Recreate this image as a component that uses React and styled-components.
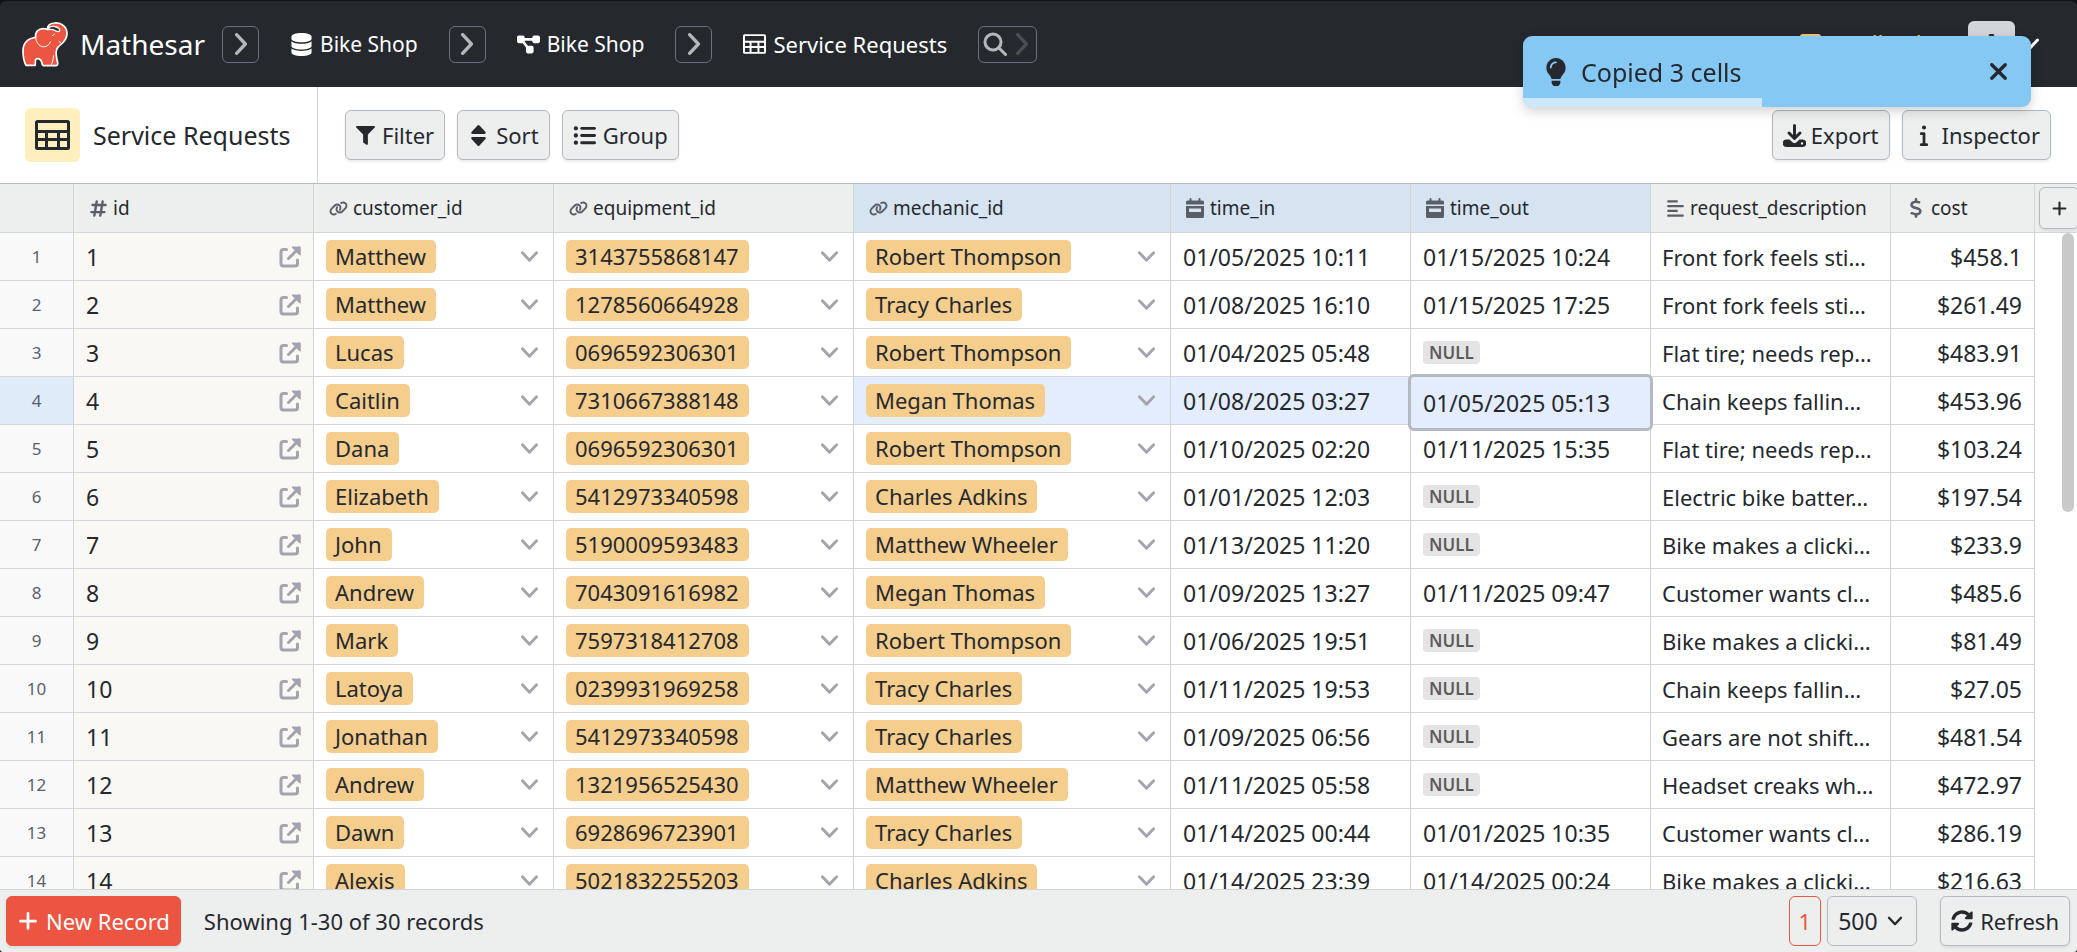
import React from "react";
import styled, { createGlobalStyle, css } from "styled-components";
import { FaDatabase, FaDiagramProject, FaDollarSign, FaAlignLeft, FaListUl, FaXmark, FaInfo, FaPlus, FaHashtag, FaLink, FaMessage } from "react-icons/fa6";
import { FaLightbulb, FaSyncAlt, FaFilter } from "react-icons/fa";

const Global = createGlobalStyle`
  * { box-sizing: border-box; }
  html { background: #111214; }
  body { margin: 0; font-family: "Noto Sans", sans-serif; font-size: 23px; line-height: 32px; color: #25292e; }
  button, select { font: inherit; color: inherit; margin: 0; cursor: pointer; }
  a { color: inherit; text-decoration: none; }
  svg { display: block; flex: none; }
`;

const Page = styled.div`
  height: 100vh;
  border-top: 1px solid #121315;
  display: flex;
  flex-direction: column;
`;

const Header = styled.header`
  height: 86px;
  flex: none;
  background: #25292e;
  color: #fff;
  border-radius: 6px 6px 0 0;
  display: flex;
  align-items: center;
  padding: 0 37px 0 22px;
`;

const Brand = styled.a`
  display: flex;
  align-items: center;
  gap: 11px;
  font-size: 28px;
  width: 200px;
`;

const Crumb = styled.a`
  display: flex;
  align-items: center;
  gap: 7px;
  margin: 0 31px;
  font-size: ${(p) => (p.$current ? 22 : 21)}px;
`;

const NavButton = styled.button`
  height: 37px;
  width: ${(p) => (p.$wide ? 59 : 37)}px;
  padding: 0;
  border: 1px solid #6b7080;
  border-radius: 6px;
  background: none;
  color: #b4b7bd;
  display: flex;
  align-items: center;
  justify-content: center;
  gap: 4px;
`;

const UserArea = styled.div`
  margin-left: auto;
  display: flex;
  align-items: center;
  gap: 5px;
`;

const Feedback = styled.a`
  display: flex;
  align-items: center;
  gap: 5px;
  margin-right: 35px;
  font-size: 23px;
  color: #f8c471;
`;

const Avatar = styled.span`
  width: 47px;
  height: 47px;
  border-radius: 6px;
  background: #d2d5da;
  color: #25292e;
  font-size: 28px;
  font-weight: 600;
  text-align: center;
  line-height: 47px;
`;

const Toolbar = styled.div`
  height: 97px;
  flex: none;
  background: #fff;
  border-bottom: 1px solid #b3bac3;
  display: flex;
  align-items: center;
  gap: 12px;
  padding-right: 26px;
`;

const Title = styled.h1`
  margin: 0 15px 0 0;
  height: 100%;
  width: 318px;
  border-right: 1px solid #d2d5da;
  padding-left: 25px;
  display: flex;
  align-items: center;
  gap: 13px;
  font-size: 25px;
  font-weight: 400;
  white-space: nowrap;
`;

const TitleIcon = styled.span`
  width: 55px;
  height: 54px;
  border-radius: 6px;
  background: #ffefbf;
  display: flex;
  align-items: center;
  justify-content: center;
`;

const Button = styled.button`
  height: 50px;
  padding: 0 10px;
  border: 1px solid #b3bac3;
  border-radius: 6px;
  background: #edefee;
  box-shadow: 0 2px 3px rgba(0, 0, 0, 0.08);
  display: flex;
  align-items: center;
  justify-content: center;
  gap: ${(p) => (p.$tight ? 5 : 7)}px;
  font-size: 22px;
  white-space: nowrap;
  ${(p) => p.$primary && css`
    background: #eb5541;
    border-color: #eb5541;
    color: #fff;
  `}
  ${(p) => p.$current && css`
    padding: 0 9px;
    border-color: #eb5541;
    color: #eb5541;
    box-shadow: none;
  `}
`;

const Spacer = styled.div`
  flex: 1;
`;

const Sheet = styled.main`
  flex: 1;
  min-height: 0;
  overflow: hidden;
  background: #fff;
  position: relative;
`;

const Table = styled.table`
  width: 100%;
  min-width: 2090px;
  table-layout: fixed;
  border-collapse: separate;
  border-spacing: 0;
`;

const HeadCell = styled.th`
  height: 49px;
  padding: 0 0 0 15px;
  text-align: left;
  font-weight: 400;
  font-size: 19px;
  background: ${(p) => (p.$selected ? "#d6e3f0" : "#edefee")};
  border-right: 1px solid #d2d5da;
  border-bottom: 1px solid #d2d5da;
  &:last-child { border-right: 0; padding-left: 4px; }
`;

const HeadLabel = styled.span`
  display: flex;
  align-items: center;
  gap: 5px;
  svg { color: #5a5e66; }
`;

const AddColumn = styled(Button)`
  width: 40px;
  height: 42px;
  padding: 0;
`;

const RowNumber = styled.th`
  height: 48px;
  padding: 0;
  font-size: 17px;
  font-weight: 400;
  color: #5a606b;
  background: ${(p) => (p.$selected ? "#deebf8" : "#f9f9fa")};
  border-right: 1px solid #d2d5da;
  border-bottom: 1px solid #d2d5da;
`;

const Cell = styled.td`
  height: 48px;
  padding: 0 12px;
  white-space: nowrap;
  overflow: hidden;
  text-align: ${(p) => (p.$right ? "right" : "left")};
  background: ${(p) => (p.$selected ? "#e4edfd" : p.$key ? "#f9f8f4" : "#fff")};
  border-right: 1px solid #d2d5da;
  border-bottom: 1px solid #d2d5da;
  ${(p) => p.$prose && css`
    padding: 0 11px;
    font-size: 22px;
  `}
  ${(p) => p.$active && css`
    position: relative;
    overflow: visible;
  `}
`;

const BlankCell = styled.td`
  padding: 0;
`;

const ActiveBox = styled.div`
  position: absolute;
  inset: -3px -3px -7px -3px;
  z-index: 1;
  padding: 0 12px;
  border: 3px solid #b3bac1;
  border-radius: 6px;
  background: #e4edfd;
  display: flex;
  align-items: center;
`;

const Split = styled.div`
  display: flex;
  align-items: center;
  justify-content: space-between;
`;

const Pill = styled.span`
  height: 33px;
  line-height: 33px;
  padding: 0 10px 0 9px;
  border-radius: 5px;
  background: #f5cd8d;
  font-size: 22px;
`;

const IconButton = styled.button`
  border: 0;
  padding: ${(p) => (p.$inset ? "0 2px" : 0)};
  background: none;
  color: #a3a4ad;
`;

const Null = styled.span`
  display: block;
  width: max-content;
  padding: 0 6px;
  border-radius: 4px;
  background: #e4e4e4;
  color: #5c5c5c;
  font-size: 17px;
  line-height: 23px;
  font-weight: 600;
`;

const ScrollThumb = styled.div`
  position: absolute;
  top: 49px;
  right: 3px;
  width: 12px;
  height: 279px;
  border-radius: 6px;
  background: #c9c9c9;
`;

const Footer = styled.footer`
  height: 63px;
  flex: none;
  border-top: 1px solid #d2d5da;
  border-radius: 0 0 3px 3px;
  background: #edefee;
  display: flex;
  align-items: center;
  gap: 6px;
  padding: 0 7px 0 6px;
`;

const Count = styled.span`
  margin-left: 17px;
  font-size: 22px;
`;

const SizePicker = styled.label`
  position: relative;
  display: flex;
  align-items: center;
  margin-right: 17px;
  select {
    appearance: none;
    width: 90px;
    height: 50px;
    padding: 0 0 0 10px;
    border: 1px solid #b3bac3;
    border-radius: 6px;
    background: #edefee;
  }
  svg { position: absolute; right: 14px; pointer-events: none; }
`;

const Toast = styled.div`
  position: fixed;
  top: 36px;
  right: 46px;
  width: 508px;
  height: 71px;
  z-index: 5;
  padding: 0 19px;
  border-radius: 9px;
  overflow: hidden;
  background: #85c8f4;
  display: flex;
  align-items: center;
  gap: 11px;
  font-size: 25px;
  filter: drop-shadow(0 4px 6px rgba(0, 0, 0, 0.18));
`;

const ToastProgress = styled.div`
  position: absolute;
  left: 0;
  bottom: 0;
  width: 47%;
  height: 9px;
  background: #cee8fb;
`;

const CloseButton = styled(IconButton)`
  margin-left: auto;
  color: #25292e;
`;

const Chevron = ({ size = 20, dir = "down", width = 3, color = "currentColor" }) => (
  <svg width={size} height={size} viewBox="0 0 20 20" fill="none" stroke={color} strokeWidth={width} strokeLinecap="round" strokeLinejoin="round">
    <path d={dir === "down" ? "M2.5 6 10 14 17.5 6" : "M6 1.5 14 10 6 18.5"} />
  </svg>
);

const TableIcon = ({ w, h, stroke = 2 }) => (
  <svg width={w} height={h} viewBox="0 0 35 30" fill="none" stroke="currentColor" strokeWidth={stroke}>
    <rect x="1.5" y="1.5" width="32" height="27" rx="1" />
    <path d="M1 11.500h33M1 19.500h33M11.500 11v17M23.500 11v17" />
  </svg>
);

const OpenIcon = () => (
  <svg width="22" height="22" viewBox="0 0 22 22" fill="none" stroke="currentColor" strokeWidth="3" strokeLinecap="round">
    <path d="M7.500 3.500H4.500a2.500 2.500 0 0 0-2.500 2.500v11.500A2.500 2.500 0 0 0 4.500 20h11.500a2.500 2.500 0 0 0 2.500-2.500V14" />
    <path d="M9.500 12.500 17 5" />
    <path d="M13.500 1.200h7.500v7.500z" fill="currentColor" strokeWidth="1.500" strokeLinejoin="round" />
  </svg>
);

const CalendarIcon = () => (
  <svg width="19" height="20" viewBox="0 0 19 20" fill="currentColor">
    <path d="M0 6.500V4a1.500 1.500 0 0 1 1.500-1.500H3.500V1a1 1 0 0 1 2 0v1.500h7V1a1 1 0 0 1 2 0v1.500h2A1.500 1.500 0 0 1 18 4v2.500z" />
    <path fillRule="evenodd" d="M0 8h18v10.500a1.500 1.500 0 0 1-1.500 1.500h-15A1.500 1.500 0 0 1 0 18.500zM3 10.500v3.500h12v-3.500z" />
  </svg>
);

const SortIcon = () => (
  <svg width="21" height="21" viewBox="-3 0 21 21" fill="currentColor">
    <path d="M6.500.6a1.400 1.400 0 0 1 2 0l5.800 6.200c.9 1 .4 2.200-.8 2.200h-12C.3 9-.2 7.800.7 6.800zM6.500 20.400a1.400 1.400 0 0 0 2 0l5.800-6.200c.9-1 .4-2.200-.8-2.200h-12c-1.200 0-1.700 1.200-.8 2.200z" />
  </svg>
);

const ExportIcon = () => (
  <svg width="23" height="23" viewBox="0 0 23 23">
    <path d="M11.500 1.500V13M6 9l5.500 5.500L17 9" fill="none" stroke="currentColor" strokeWidth="3" strokeLinecap="round" strokeLinejoin="round" />
    <path fillRule="evenodd" fill="currentColor" d="M3.500 15.500h3l3 2.700a3 3 0 0 0 4 0l3-2.700h3a3.500 3.500 0 0 1 0 7.500h-16a3.500 3.500 0 0 1 0-7.500zM19 18.200a1.200 1.200 0 1 0 0 2.400 1.200 1.200 0 0 0 0-2.400z" />
  </svg>
);

const SearchIcon = () => (
  <svg width="24" height="24" viewBox="0 0 24 24" fill="none" stroke="currentColor" strokeWidth="3" strokeLinecap="round">
    <circle cx="10" cy="10" r="8" />
    <path d="m16 16 6.500 6.500" />
  </svg>
);

const Logo = () => (
  <svg width="47" height="47" viewBox="18 20 142 142">
    <path
      fill="#eb5541"
      stroke="#fff"
      strokeWidth="5"
      strokeLinejoin="round"
      d="M59 69C57 54 68 42 84 43Q90 43 96 46C93 36 101 27 116 26C138 24 154 38 154 58C154 76 144 85 133 93C122 101 119 111 122 126Q123 137 126 147Q127 155 117 155H84Q79 155 78 146C76 133 64 131 59 137Q58 144 58 154H30C24 143 21 128 21 110C21 86 36 73 59 69Z"
    />
    <path fill="#25292e" stroke="#fff" strokeWidth="4" strokeLinejoin="round" d="M99 40C109 34 123 36 130 43Q135 50 128 52C119 52 113 42 99 46Z" />
    <path fill="none" stroke="#fff" strokeWidth="3" strokeLinecap="round" d="M59 68C60 84 69 97 83 98C94 98 101 91 104 83M110 64l6-4M130 82l4 3M113 125C113 136 110 146 106 153" />
  </svg>
);

const columns = [
  ["id", <FaHashtag size={19} />, 240],
  ["customer_id", <FaLink size={19} />, 240],
  ["equipment_id", <FaLink size={19} />, 300],
  ["mechanic_id", <FaLink size={19} />, 317, true],
  ["time_in", <CalendarIcon />, 240, true],
  ["time_out", <CalendarIcon />, 240, true],
  ["request_description", <FaAlignLeft size={19} />, 240],
  ["cost", <FaDollarSign size={20} />, 144],
];

const rows = [
  ["Matthew", "3143755868147", "Robert Thompson", "01/05/2025 10:11", "01/15/2025 10:24", "Front fork feels sti…", "$458.1"],
  ["Matthew", "1278560664928", "Tracy Charles", "01/08/2025 16:10", "01/15/2025 17:25", "Front fork feels sti…", "$261.49"],
  ["Lucas", "0696592306301", "Robert Thompson", "01/04/2025 05:48", null, "Flat tire; needs rep…", "$483.91"],
  ["Caitlin", "7310667388148", "Megan Thomas", "01/08/2025 03:27", "01/05/2025 05:13", "Chain keeps fallin…", "$453.96"],
  ["Dana", "0696592306301", "Robert Thompson", "01/10/2025 02:20", "01/11/2025 15:35", "Flat tire; needs rep…", "$103.24"],
  ["Elizabeth", "5412973340598", "Charles Adkins", "01/01/2025 12:03", null, "Electric bike batter…", "$197.54"],
  ["John", "5190009593483", "Matthew Wheeler", "01/13/2025 11:20", null, "Bike makes a clicki…", "$233.9"],
  ["Andrew", "7043091616982", "Megan Thomas", "01/09/2025 13:27", "01/11/2025 09:47", "Customer wants cl…", "$485.6"],
  ["Mark", "7597318412708", "Robert Thompson", "01/06/2025 19:51", null, "Bike makes a clicki…", "$81.49"],
  ["Latoya", "0239931969258", "Tracy Charles", "01/11/2025 19:53", null, "Chain keeps fallin…", "$27.05"],
  ["Jonathan", "5412973340598", "Tracy Charles", "01/09/2025 06:56", null, "Gears are not shift…", "$481.54"],
  ["Andrew", "1321956525430", "Matthew Wheeler", "01/11/2025 05:58", null, "Headset creaks wh…", "$472.97"],
  ["Dawn", "6928696723901", "Tracy Charles", "01/14/2025 00:44", "01/01/2025 10:35", "Customer wants cl…", "$286.19"],
  ["Alexis", "5021832255203", "Charles Adkins", "01/14/2025 23:39", "01/14/2025 00:24", "Bike makes a clicki…", "$216.63"],
];

const LinkedCell = ({ value, selected }) => (
  <Cell $selected={selected}>
    <Split>
      <Pill>{value}</Pill>
      <IconButton $inset aria-label={`Change ${value}`}><Chevron size={19} /></IconButton>
    </Split>
  </Cell>
);

const Row = ({ number, data }) => {
  const [customer, equipment, mechanic, timeIn, timeOut, description, cost] = data;
  const selected = number === 4;
  return (
    <tr>
      <RowNumber scope="row" $selected={selected}>{number}</RowNumber>
      <Cell $key>
        <Split>
          {number}
          <IconButton aria-label={`Open record ${number}`}><OpenIcon /></IconButton>
        </Split>
      </Cell>
      <LinkedCell value={customer} />
      <LinkedCell value={equipment} />
      <LinkedCell value={mechanic} selected={selected} />
      <Cell $selected={selected}>{timeIn}</Cell>
      <Cell $selected={selected} $active={selected}>
        {selected ? <ActiveBox>{timeOut}</ActiveBox> : timeOut || <Null>NULL</Null>}
      </Cell>
      <Cell $prose>{description}</Cell>
      <Cell $right>{cost}</Cell>
      <BlankCell />
    </tr>
  );
};

export default function App() {
  return (
    <Page>
      <Global />
      <Header>
        <Brand href="#"><Logo />Mathesar</Brand>
        <NavButton aria-label="Databases"><Chevron size={22} dir="right" /></NavButton>
        <Crumb href="#"><FaDatabase size={23} />Bike Shop</Crumb>
        <NavButton aria-label="Schemas"><Chevron size={22} dir="right" /></NavButton>
        <Crumb href="#"><FaDiagramProject size={23} />Bike Shop</Crumb>
        <NavButton aria-label="Tables"><Chevron size={22} dir="right" /></NavButton>
        <Crumb $current href="#"><TableIcon w={23} h={20} stroke={3} />Service Requests</Crumb>
        <NavButton $wide aria-label="Search"><SearchIcon /><Chevron size={22} dir="right" color="#4a4e57" /></NavButton>
        <UserArea>
          <Feedback href="#"><FaMessage size={21} />Feedback</Feedback>
          <Avatar>A</Avatar>
          <Chevron size={20} />
        </UserArea>
      </Header>

      <Toolbar>
        <Title><TitleIcon><TableIcon w={35} h={30} stroke={3} /></TitleIcon>Service Requests</Title>
        <Button><FaFilter size={19} />Filter</Button>
        <Button><SortIcon />Sort</Button>
        <Button><FaListUl size={23} />Group</Button>
        <Spacer />
        <Button $tight><ExportIcon />Export</Button>
        <Button><FaInfo size={22} />Inspector</Button>
      </Toolbar>

      <Sheet>
        <Table>
          <colgroup>
            <col style={{ width: 74 }} />
            {columns.map(([name, , width]) => <col key={name} style={{ width }} />)}
            <col />
          </colgroup>
          <thead>
            <tr>
              <HeadCell />
              {columns.map(([name, icon, , selected]) => (
                <HeadCell key={name} $selected={selected}><HeadLabel>{icon}{name}</HeadLabel></HeadCell>
              ))}
              <HeadCell><AddColumn aria-label="Add column"><FaPlus size={17} /></AddColumn></HeadCell>
            </tr>
          </thead>
          <tbody>
            {rows.map((data, i) => <Row key={i} number={i + 1} data={data} />)}
          </tbody>
        </Table>
        <ScrollThumb />
      </Sheet>

      <Footer>
        <Button $primary><FaPlus size={22} />New Record</Button>
        <Count>Showing 1-30 of 30 records</Count>
        <Spacer />
        <Button $current>1</Button>
        <SizePicker>
          <select aria-label="Records per page" defaultValue="500">
            <option>500</option>
          </select>
          <Chevron size={16} />
        </SizePicker>
        <Button><FaSyncAlt size={22} />Refresh</Button>
      </Footer>

      <Toast role="status">
        <FaLightbulb size={28} />
        Copied 3 cells
        <CloseButton aria-label="Dismiss"><FaXmark size={27} /></CloseButton>
        <ToastProgress />
      </Toast>
    </Page>
  );
}
